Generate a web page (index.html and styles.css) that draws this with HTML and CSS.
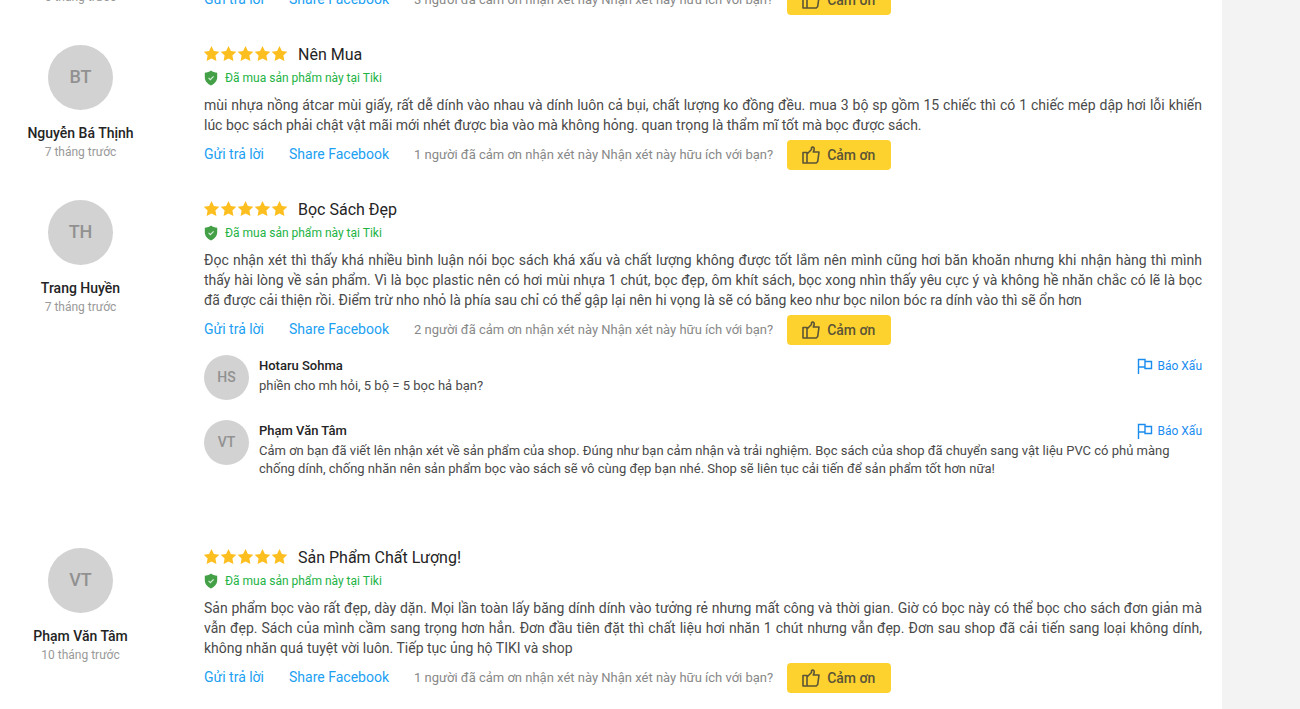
FILE: index.html
```html
<!DOCTYPE html>
<html lang="vi">
<head>
    <meta charset="UTF-8">
    <meta name="viewport" content="width=device-width, initial-scale=1.0">
    <title>Nhận xét sản phẩm</title>
    <link rel="stylesheet" href="styles.css">
</head>
<body>
    <!-- shared icons -->
    <svg class="sprite" aria-hidden="true">
        <symbol id="stars" viewBox="0 0 84 16">
            <path id="star" d="M7.500 0 9.900 5 15.300 5.700 11.400 9.500 12.400 15 7.500 12.400 2.600 15 3.600 9.500 -.3 5.700 5.100 5Z"/>
            <use href="#star" x="17"/>
            <use href="#star" x="34"/>
            <use href="#star" x="51"/>
            <use href="#star" x="68"/>
        </symbol>
        <symbol id="shield" viewBox="0 0 14 16">
            <path fill="#43a047" d="M7 .5C5.300 2 3.200 2.600 .8 2.700V7c0 3.800 2.400 6.700 6.200 8.500 3.800-1.800 6.200-4.700 6.200-8.500V2.700C10.800 2.600 8.700 2 7 .5Z"/>
            <path fill="none" stroke="#d9efda" stroke-width="1.200" d="m4.600 7.900 1.700 1.700 3.300-3.300"/>
        </symbol>
        <symbol id="thumb" viewBox="0 0 18 18">
            <path fill="none" stroke="currentColor" stroke-width="1.600" stroke-linejoin="round" d="M1 6.500h4V17H1ZM5 8l4.500-4.500V1.700c.8-1 2.500-.8 2.700.8.100.8-.2 2.200-.9 3.500H17l-1.300 9.500-1.500 1.500H5"/>
        </symbol>
        <symbol id="flag" viewBox="0 0 16 16">
            <path fill="none" stroke="currentColor" stroke-width="1.400" d="M1.500 16V1.500H8V9H1.500M8 3.500h6.500v7H8V9"/>
        </symbol>
    </svg>

    <main class="panel">
        <article class="review review-cut">
            <div class="author">
                <p class="date">6 tháng trước</p>
            </div>
            <div class="content">
                <div class="actions">
                    <a class="action-link" href="#">Gửi trả lời</a>
                    <a class="action-link" href="#">Share Facebook</a>
                    <p class="thanks">3 người đã cảm ơn nhận xét này <span>Nhận xét này hữu ích với bạn?</span></p>
                    <button class="btn-thanks" type="button"><svg class="icon-thumb"><use href="#thumb"/></svg>Cảm ơn</button>
                </div>
            </div>
        </article>

        <article class="review">
            <div class="author">
                <div class="avatar">BT</div>
                <p class="name">Nguyễn Bá Thịnh</p>
                <p class="date">7 tháng trước</p>
            </div>
            <div class="content">
                <div class="heading">
                    <svg class="stars" role="img" aria-label="5 sao"><use href="#stars"/></svg>
                    <h3 class="title">Nên Mua</h3>
                </div>
                <p class="verified"><svg class="icon-shield"><use href="#shield"/></svg>Đã mua sản phẩm này tại Tiki</p>
                <p class="text">mùi nhựa nồng átcar mùi giấy, rất dễ dính vào nhau và dính luôn cả bụi, chất lượng ko đồng đều. mua 3 bộ sp gồm 15 chiếc thì có 1 chiếc mép dập hơi lỗi khiến lúc bọc sách phải chật vật mãi mới nhét được bìa vào mà không hỏng. quan trọng là thẩm mĩ tốt mà bọc được sách.</p>
                <div class="actions">
                    <a class="action-link" href="#">Gửi trả lời</a>
                    <a class="action-link" href="#">Share Facebook</a>
                    <p class="thanks">1 người đã cảm ơn nhận xét này <span>Nhận xét này hữu ích với bạn?</span></p>
                    <button class="btn-thanks" type="button"><svg class="icon-thumb"><use href="#thumb"/></svg>Cảm ơn</button>
                </div>
            </div>
        </article>

        <article class="review">
            <div class="author">
                <div class="avatar">TH</div>
                <p class="name">Trang Huyền</p>
                <p class="date">7 tháng trước</p>
            </div>
            <div class="content">
                <div class="heading">
                    <svg class="stars" role="img" aria-label="5 sao"><use href="#stars"/></svg>
                    <h3 class="title">Bọc Sách Đẹp</h3>
                </div>
                <p class="verified"><svg class="icon-shield"><use href="#shield"/></svg>Đã mua sản phẩm này tại Tiki</p>
                <p class="text">Đọc nhận xét thì thấy khá nhiều bình luận nói bọc sách khá xấu và chất lượng không được tốt lắm nên mình cũng hơi băn khoăn nhưng khi nhận hàng thì mình thấy hài lòng về sản phẩm. Vì là bọc plastic nên có hơi mùi nhựa 1 chút, bọc đẹp, ôm khít sách, bọc xong nhìn thấy yêu cực ý và không hề nhăn chắc có lẽ là bọc đã được cải thiện rồi. Điểm trừ nho nhỏ là phía sau chỉ có thể gập lại nên hi vọng là sẽ có băng keo như bọc nilon bóc ra dính vào thì sẽ ổn hơn</p>
                <div class="actions">
                    <a class="action-link" href="#">Gửi trả lời</a>
                    <a class="action-link" href="#">Share Facebook</a>
                    <p class="thanks">2 người đã cảm ơn nhận xét này <span>Nhận xét này hữu ích với bạn?</span></p>
                    <button class="btn-thanks" type="button"><svg class="icon-thumb"><use href="#thumb"/></svg>Cảm ơn</button>
                </div>

                <div class="replies">
                    <div class="reply">
                        <div class="avatar avatar-small">HS</div>
                        <div class="reply-body">
                            <div class="reply-head">
                                <p class="reply-name">Hotaru Sohma</p>
                                <a class="report" href="#"><svg class="icon-flag"><use href="#flag"/></svg>Báo Xấu</a>
                            </div>
                            <p class="reply-text">phiền cho mh hỏi, 5 bộ = 5 bọc hả bạn?</p>
                        </div>
                    </div>
                    <div class="reply">
                        <div class="avatar avatar-small">VT</div>
                        <div class="reply-body">
                            <div class="reply-head">
                                <p class="reply-name">Phạm Văn Tâm</p>
                                <a class="report" href="#"><svg class="icon-flag"><use href="#flag"/></svg>Báo Xấu</a>
                            </div>
                            <p class="reply-text">Cảm ơn bạn đã viết lên nhận xét về sản phẩm của shop. Đúng như bạn cảm nhận và trải nghiệm. Bọc sách của shop đã chuyển sang vật liệu PVC có phủ màng chống dính, chống nhăn nên sản phẩm bọc vào sách sẽ vô cùng đẹp bạn nhé. Shop sẽ liên tục cải tiến để sản phẩm tốt hơn nữa!</p>
                        </div>
                    </div>
                </div>
            </div>
        </article>

        <article class="review">
            <div class="author">
                <div class="avatar">VT</div>
                <p class="name">Phạm Văn Tâm</p>
                <p class="date">10 tháng trước</p>
            </div>
            <div class="content">
                <div class="heading">
                    <svg class="stars" role="img" aria-label="5 sao"><use href="#stars"/></svg>
                    <h3 class="title">Sản Phẩm Chất Lượng!</h3>
                </div>
                <p class="verified"><svg class="icon-shield"><use href="#shield"/></svg>Đã mua sản phẩm này tại Tiki</p>
                <p class="text">Sản phẩm bọc vào rất đẹp, dày dặn. Mọi lần toàn lấy băng dính dính vào tưởng rẻ nhưng mất công và thời gian. Giờ có bọc này có thể bọc cho sách đơn giản mà vẫn đẹp. Sách của mình cầm sang trọng hơn hẳn. Đơn đầu tiên đặt thì chất liệu hơi nhăn 1 chút nhưng vẫn đẹp. Đơn sau shop đã cải tiến sang loại không dính, không nhăn quá tuyệt vời luôn. Tiếp tục ủng hộ TIKI và shop</p>
                <div class="actions">
                    <a class="action-link" href="#">Gửi trả lời</a>
                    <a class="action-link" href="#">Share Facebook</a>
                    <p class="thanks">1 người đã cảm ơn nhận xét này <span>Nhận xét này hữu ích với bạn?</span></p>
                    <button class="btn-thanks" type="button"><svg class="icon-thumb"><use href="#thumb"/></svg>Cảm ơn</button>
                </div>
            </div>
        </article>
    </main>
</body>
</html>
```

FILE: styles.css
```css
* {
    box-sizing: border-box;
}
body {
    margin: 0;
    background-color: #f3f3f3;
    color: #242424;
    font-family: Roboto, "Liberation Sans", Arial, sans-serif;
    font-size: 14px;
    line-height: 20px;
}
p, h3 {
    margin: 0;
}
a {
    text-decoration: none;
}
.sprite {
    display: none;
}
.panel {
    margin-right: 78px;
    padding: 0 20px 16px 0;
    background: #fff;
}
.review {
    display: grid;
    grid-template-columns: 161px 1fr;
    column-gap: 43px;
    margin-bottom: 30px;
}
/* only the bottom of this review is in view */
.review-cut {
    grid-template-rows: 15px;
    align-items: end;
    overflow: hidden;
}
.review-cut .author {
    padding-bottom: 9px;
}
.author {
    text-align: center;
}
.avatar {
    display: flex;
    align-items: center;
    justify-content: center;
    width: 65px;
    height: 65px;
    margin: 0 auto 13px;
    padding-bottom: 2px;
    border-radius: 50%;
    background: #d2d2d2;
    color: #919191;
    font-size: 18px;
    font-weight: 500;
}
.name {
    font-weight: 500;
}
.date {
    color: #999;
    font-size: 12px;
    line-height: 18px;
}
.heading {
    display: flex;
    align-items: center;
    gap: 10px;
}
.stars {
    width: 84px;
    height: 16px;
    margin-bottom: 2px;
    fill: #fdbe1f;
    overflow: visible;
}
.title {
    font-size: 16px;
    font-weight: 400;
}
.verified {
    display: flex;
    align-items: center;
    gap: 7px;
    margin: 3px 0 7px;
    color: #22b345;
    font-size: 12px;
}
.icon-shield {
    width: 14px;
    height: 16px;
}
.text {
    color: #4a4a4a;
    text-align: justify;
}
.actions {
    display: flex;
    align-items: center;
    margin-top: 5px;
}
.action-link {
    margin-right: 25px;
    padding-bottom: 2px;
    color: #1ba0f2;
}
.thanks {
    margin-right: 14px;
    color: #888;
    font-size: 13px;
}
.btn-thanks {
    display: flex;
    align-items: center;
    gap: 7px;
    height: 30px;
    padding: 0 16px 0 15px;
    border: 0;
    border-radius: 4px;
    background: #fdd22f;
    color: #5b5436;
    font: 500 14px Roboto, "Liberation Sans", Arial, sans-serif;
}
.icon-thumb {
    width: 18px;
    height: 18px;
}
.replies {
    display: grid;
    gap: 20px;
    margin-top: 10px;
    padding-bottom: 40px;
}
.reply {
    display: flex;
    gap: 10px;
}
.avatar-small {
    flex: none;
    width: 45px;
    height: 45px;
    margin: 0;
    font-size: 14px;
}
.reply-body {
    flex: 1;
}
.reply-head {
    display: flex;
    align-items: center;
    justify-content: space-between;
    height: 22px;
}
.reply-name {
    font-size: 13px;
    font-weight: 500;
}
.reply-text {
    color: #4a4a4a;
    font-size: 13px;
    line-height: 18px;
}
.report {
    display: flex;
    align-items: center;
    gap: 5px;
    color: #1a8cf0;
    font-size: 12px;
}
.icon-flag {
    width: 16px;
    height: 16px;
}
```
